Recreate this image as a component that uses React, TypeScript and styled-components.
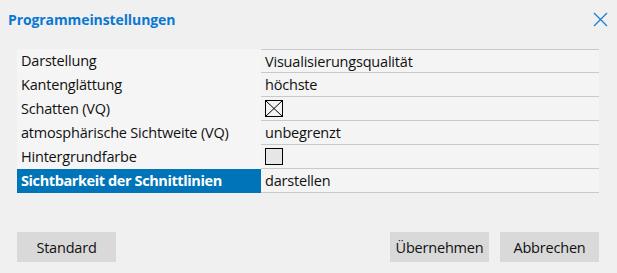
import React from 'react';
import styled, { createGlobalStyle } from 'styled-components';

const GlobalStyle = createGlobalStyle`
  html, body {
    margin: 0;
    padding: 0;
    background: #f0f0f0;
  }
  body {
    font-family: 'Open Sans', 'Noto Sans', sans-serif;
    font-size: 14.5px;
    color: #111;
  }
`;

interface ISetting {
  label: string;
  value?: string;
  checkbox?: 'checked' | 'empty';
  selected?: boolean;
}

const settings: ISetting[] = [
  { label: 'Darstellung', value: 'Visualisierungsqualität' },
  { label: 'Kantenglättung', value: 'höchste' },
  { label: 'Schatten (VQ)', checkbox: 'checked' },
  { label: 'atmosphärische Sichtweite (VQ)', value: 'unbegrenzt' },
  { label: 'Hintergrundfarbe', checkbox: 'empty' },
  { label: 'Sichtbarkeit der Schnittlinien', value: 'darstellen', selected: true },
];

const Dialog = styled.div`
  display: flex;
  flex-direction: column;
  width: 617px;
  height: 273px;
  box-sizing: border-box;
  background: #f0f0f0;
`;

const Header = styled.div`
  display: flex;
  align-items: center;
  justify-content: space-between;
  height: 39px;
  padding: 0 9px 0 8px;
  box-sizing: border-box;
`;

const Title = styled.div`
  font-weight: 700;
  font-size: 14px;
  color: #0a78d2;
  letter-spacing: -0.1px;
`;

const CloseIcon = styled.div`
  display: flex;
  width: 15px;
  height: 15px;
  cursor: pointer;
  &:hover {
    opacity: 0.6;
  }
`;

const Table = styled.div`
  display: grid;
  grid-template-columns: 244px 338px;
  margin: 10px 18px 0 17px;
`;

const LabelCell = styled.div<{ $selected?: boolean }>`
  display: flex;
  align-items: center;
  padding: 0 0 1px 4px;
  height: 24px;
  box-sizing: border-box;
  background: ${({ $selected }) => ($selected ? '#0074b8' : '#f5f5f5')};
  color: ${({ $selected }) => ($selected ? '#fff' : '#111')};
  font-weight: ${({ $selected }) => ($selected ? 700 : 400)};
  letter-spacing: ${({ $selected }) => ($selected ? '-0.4px' : '-0.2px')};
`;

const ValueCell = styled.div<{ $first?: boolean }>`
  display: flex;
  align-items: center;
  padding-left: 4px;
  height: 24px;
  box-sizing: border-box;
  background: #f4f4f4;
  border-bottom: 1px solid #c9c9c9;
  letter-spacing: -0.2px;
  ${({ $first }) => ($first ? 'border-top: 1px solid #c9c9c9;' : '')}
`;

const CheckBox = styled.div<{ $checked?: boolean }>`
  display: flex;
  width: 18px;
  height: 17px;
  box-sizing: border-box;
  border: 1px solid #000;
  background: ${({ $checked }) => ($checked ? '#f4f4f4' : '#e6e6e6')};
`;

const Footer = styled.div`
  display: flex;
  align-items: center;
  margin: auto 18px 11px 17px;
  gap: 11px;
`;

const Spacer = styled.div`
  flex: 1;
`;

const Button = styled.button`
  width: 99px;
  height: 30px;
  border: none;
  background: #d9d9d9;
  font-family: inherit;
  font-size: 14.5px;
  letter-spacing: -0.2px;
  color: #111;
  padding: 0;
  cursor: pointer;
`;

export default function App() {
  return (
    <>
      <GlobalStyle />
      <Dialog>
        <Header>
          <Title>Programmeinstellungen</Title>
          <CloseIcon>
            <svg width="15" height="15" viewBox="0 0 15 15">
              <path d="M1 1 L14 14 M14 1 L1 14" stroke="#1a7fd1" strokeWidth="1.3" fill="none" />
            </svg>
          </CloseIcon>
        </Header>
        <Table>
          {settings.map((s, i) => (
            <React.Fragment key={s.label}>
              <LabelCell $selected={s.selected}>{s.label}</LabelCell>
              <ValueCell $first={i === 0}>
                {s.checkbox ? (
                  <CheckBox $checked={s.checkbox === 'checked'}>
                    {s.checkbox === 'checked' && (
                      <svg width="16" height="15" viewBox="0 0 16 15">
                        <path d="M0 0 L16 15 M16 0 L0 15" stroke="#000" strokeWidth="1" fill="none" />
                      </svg>
                    )}
                  </CheckBox>
                ) : (
                  s.value
                )}
              </ValueCell>
            </React.Fragment>
          ))}
        </Table>
        <Footer>
          <Button>Standard</Button>
          <Spacer />
          <Button>Übernehmen</Button>
          <Button>Abbrechen</Button>
        </Footer>
      </Dialog>
    </>
  );
}
